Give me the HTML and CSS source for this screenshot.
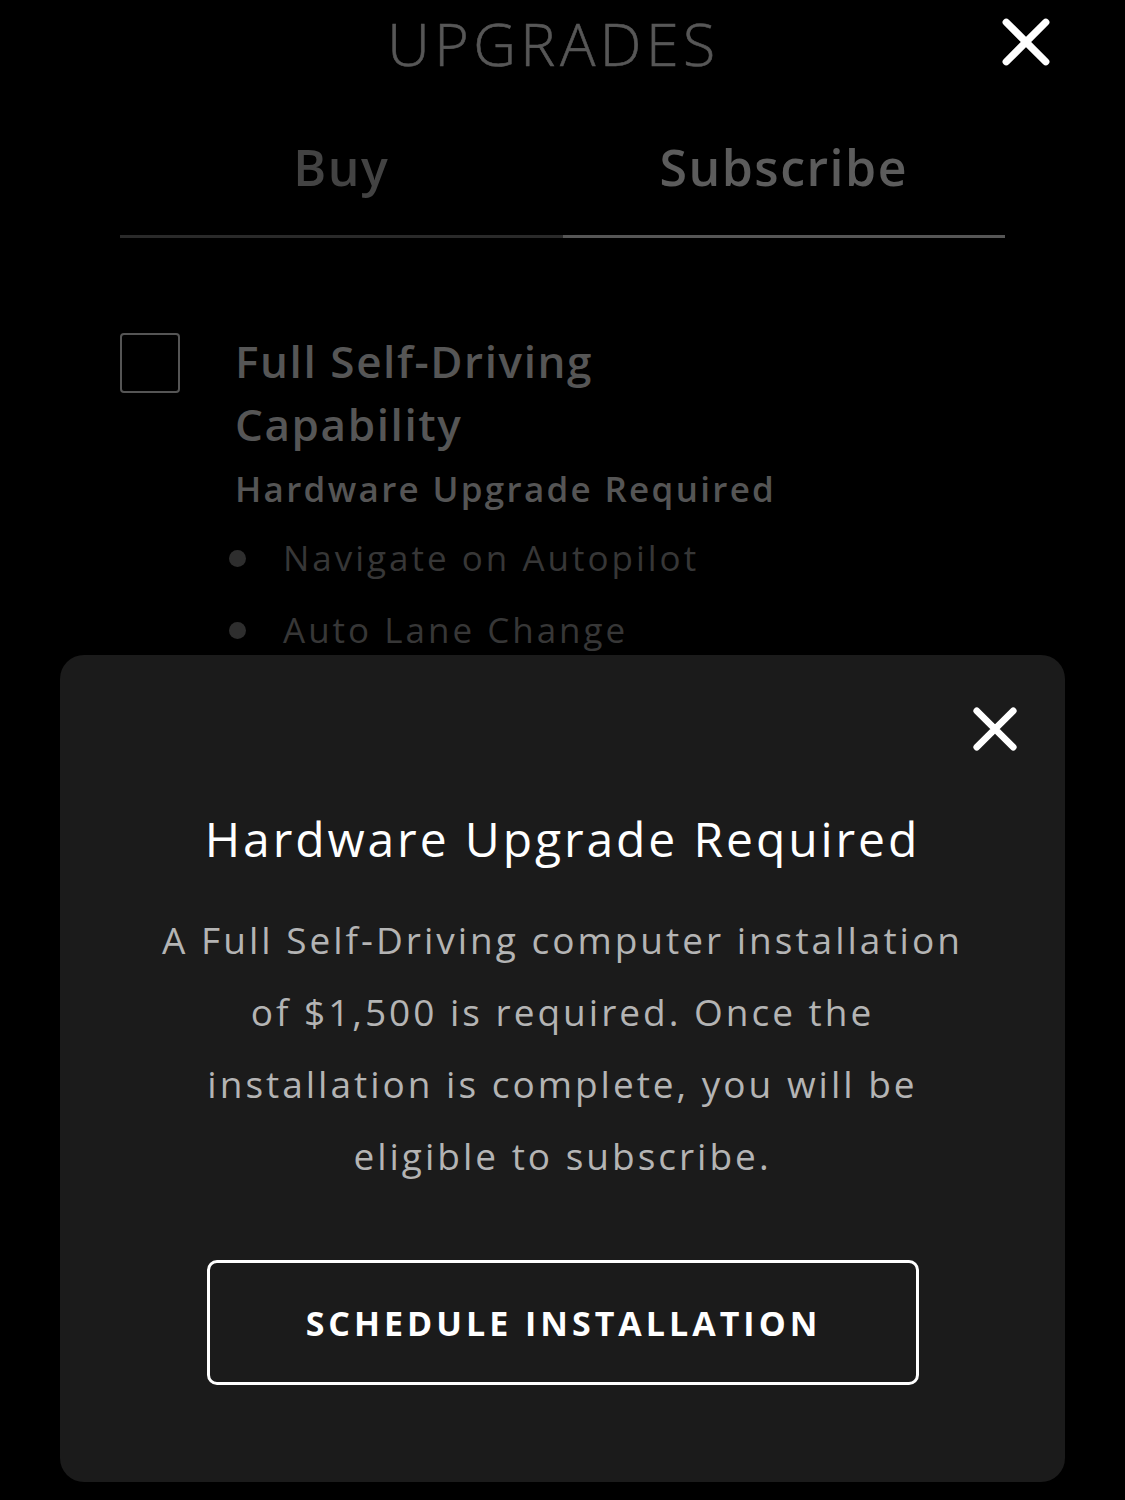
FILE: index.html
```html
<!DOCTYPE html>
<html>
<head>
    <title>Upgrades</title>
    <link rel="stylesheet" href="styles.css">
</head>
<body>
    <div class="page">
        <header class="top">
            <h1>UPGRADES</h1>
            <button class="close top-close" aria-label="Close">
                <svg viewBox="0 0 50 50" width="52" height="52"><path d="M6 6L44 44M44 6L6 44" stroke="#fff" stroke-width="7" stroke-linecap="round"/></svg>
            </button>
        </header>

        <div class="tabs">
            <div class="tab">Buy</div>
            <div class="tab active">Subscribe</div>
        </div>

        <div class="option">
            <div class="checkbox"></div>
            <div class="option-body">
                <div class="option-title">Full Self-Driving<br>Capability</div>
                <div class="option-note">Hardware Upgrade Required</div>
                <ul class="features">
                    <li>Navigate on Autopilot</li>
                    <li>Auto Lane Change</li>
                </ul>
            </div>
        </div>

        <div class="modal">
            <button class="close modal-close" aria-label="Close">
                <svg viewBox="0 0 50 50" width="48" height="48"><path d="M6 6L44 44M44 6L6 44" stroke="#fff" stroke-width="7" stroke-linecap="round"/></svg>
            </button>
            <h2>Hardware Upgrade Required</h2>
            <p>A Full Self-Driving computer installation<br>of $1,500 is required. Once the<br>installation is complete, you will be<br>eligible to subscribe.</p>
            <button class="schedule">SCHEDULE INSTALLATION</button>
        </div>
    </div>
</body>
</html>
```

FILE: styles.css
```css
body {
    margin: 0;
    background: #000;
    font-family: "Open Sans", Arial, sans-serif;
    color: #fff;
    height: 1500px;
    overflow: hidden;
}

.page {
    position: relative;
    height: 1500px;
}

.top {
    position: relative;
    height: 90px;
    display: flex;
    justify-content: center;
}

h1 {
    margin: 9px 0 0;
    font-size: 59px;
    font-weight: 300;
    -webkit-text-stroke: 0.6px #575757;
    letter-spacing: 4.5px;
    color: #575757;
    line-height: 68px;
    padding-right: 18px;
}

.close {
    background: none;
    border: none;
    padding: 0;
    cursor: pointer;
    display: block;
}

.top-close {
    position: absolute;
    top: 16px;
    right: 73px;
}

.tabs {
    display: flex;
    margin: 42px 120px 0;
}

.tab {
    flex: 1;
    text-align: center;
    font-size: 50px;
    font-weight: 600;
    color: #434343;
    line-height: 70px;
    padding-bottom: 33px;
    border-bottom: 3px solid #2a2a2a;
    letter-spacing: 1.5px;
}

.tab.active {
    color: #5c5c5c;
    border-bottom-color: #565656;
}

.option {
    display: flex;
    margin: 95px 120px 0;
}

.checkbox {
    width: 56px;
    height: 56px;
    border: 2px solid #555;
    border-radius: 4px;
    flex-shrink: 0;
}

.option-body {
    margin-left: 55px;
}

.option-title {
    font-size: 44px;
    font-weight: 600;
    line-height: 63px;
    color: #565656;
    margin-top: -3px;
    letter-spacing: 1.6px;
}

.option-note {
    font-size: 35px;
    font-weight: 600;
    color: #555;
    margin-top: 8px;
    line-height: 50px;
    letter-spacing: 2.3px;
}

.features {
    list-style: none;
    margin: 8px 0 0;
    padding: 0;
}

.features li {
    position: relative;
    padding-left: 48px;
    font-size: 35px;
    line-height: 72px;
    color: #373737;
    letter-spacing: 3px;
}

.features li::before {
    content: "";
    position: absolute;
    left: -6px;
    top: 28px;
    width: 17px;
    height: 17px;
    border-radius: 50%;
    background: #2e2e2e;
}

.modal {
    position: absolute;
    left: 60px;
    top: 655px;
    width: 1005px;
    height: 827px;
    box-sizing: border-box;
    background: #1b1b1b;
    border-radius: 24px;
    display: flex;
    flex-direction: column;
    align-items: center;
    padding: 0 40px;
}

.modal-close {
    align-self: flex-end;
    margin: 50px 6px 0 0;
}

.modal h2 {
    margin: 53px 0 0;
    font-size: 48px;
    font-weight: 400;
    line-height: 60px;
    color: #fff;
    letter-spacing: 2.9px;
}

.modal p {
    margin: 35px 0 0;
    font-size: 37px;
    line-height: 72px;
    text-align: center;
    color: #b4b4b4;
    letter-spacing: 3px;
}

.schedule {
    margin-top: 68px;
    width: 712px;
    height: 125px;
    background: transparent;
    border: 3px solid #fff;
    border-radius: 10px;
    color: #fff;
    font-family: "Open Sans", Arial, sans-serif;
    font-size: 34px;
    font-weight: 700;
    letter-spacing: 4px;
    padding-left: 8px;
    cursor: pointer;
}
```
